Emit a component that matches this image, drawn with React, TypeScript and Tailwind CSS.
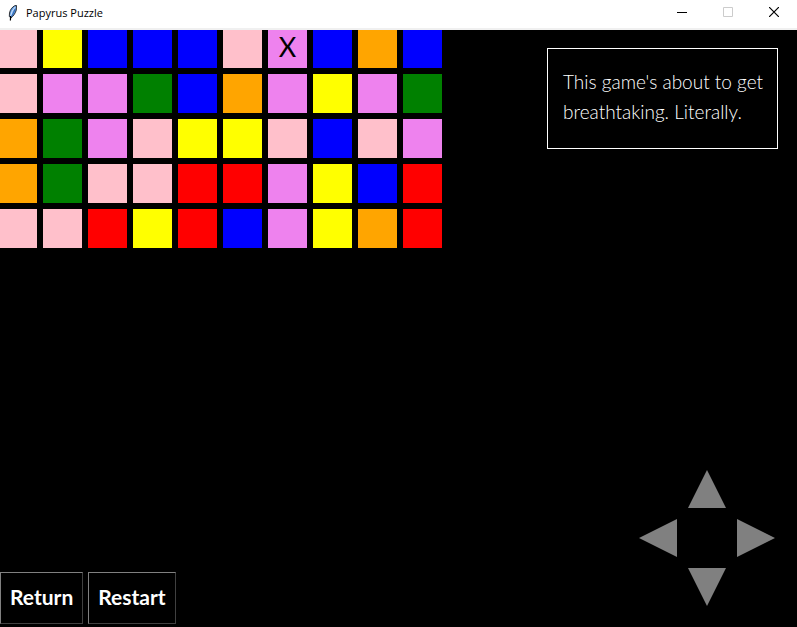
type Color = "pink" | "yellow" | "blue" | "violet" | "orange" | "green" | "red";

const fills: Record<Color, string> = {
  pink: "bg-[#ffc0cb]",
  yellow: "bg-[#ffff00]",
  blue: "bg-[#0000ff]",
  violet: "bg-[#ee82ee]",
  orange: "bg-[#ffa500]",
  green: "bg-[#008000]",
  red: "bg-[#ff0000]",
};

const board: Color[][] = [
  ["pink", "yellow", "blue", "blue", "blue", "pink", "violet", "blue", "orange", "blue"],
  ["pink", "violet", "violet", "green", "blue", "orange", "violet", "yellow", "violet", "green"],
  ["orange", "green", "violet", "pink", "yellow", "yellow", "pink", "blue", "pink", "violet"],
  ["orange", "green", "pink", "pink", "red", "red", "violet", "yellow", "blue", "red"],
  ["pink", "pink", "red", "yellow", "red", "blue", "violet", "yellow", "orange", "red"],
];

const player = { row: 0, col: 6 };

function Feather() {
  return (
    <svg width="12" height="18" viewBox="0 0 12 18" aria-hidden="true">
      <path d="M9.500 1.500 L8 1.600 C5 3 3 6 2.500 9 L2.300 12.500 L4 14 C6.500 12 8.500 9 9.300 6 Z" fill="#5b9be6" stroke="#222" strokeWidth="0.900" />
      <path d="M8.300 2.800 C6 5 4.300 8.500 3.600 12" fill="none" stroke="#c9dff8" strokeWidth="1.100" />
      <path d="M8.200 5 C7.200 8 5.800 10.500 4.400 12.800" fill="none" stroke="#2d5fa8" strokeWidth="0.900" />
      <path d="M3.600 12 L3.400 16.500" stroke="#000" strokeWidth="1.200" />
    </svg>
  );
}

function TitleBar() {
  const control = "flex h-full w-[46px] items-center justify-center";
  return (
    <header className="flex h-[30px] items-center justify-between border-b-2 border-[#f0f0f0] bg-white pl-[7px] text-black">
      <div className="flex items-center gap-[7px] pb-0.5">
        <Feather />
        <h1 className="font-['Segoe_UI','Open_Sans',sans-serif] text-[11px] leading-4">Papyrus Puzzle</h1>
      </div>
      <div className="flex h-full pb-1">
        <button className={control} aria-label="Minimize">
          <svg width="10" height="10" viewBox="0 0 10 10" shapeRendering="crispEdges">
            <path d="M0 5.500H10" stroke="#000" />
          </svg>
        </button>
        <button className={control} aria-label="Maximize" disabled>
          <svg width="10" height="10" viewBox="0 0 10 10">
            <path d="M.5 .5H9.500V9.500H.5Z" fill="none" stroke="#ccc" />
          </svg>
        </button>
        <button className={control} aria-label="Close">
          <svg width="10" height="10" viewBox="0 0 10 10">
            <path d="M0 0L10 10M10 0L0 10" stroke="#000" strokeWidth="1.200" />
          </svg>
        </button>
      </div>
    </header>
  );
}

function Board() {
  return (
    <div className="grid grid-cols-[37px_repeat(9,39px)] grid-rows-[38px_repeat(4,39px)] gap-1.5">
      {board.map((row, r) =>
        row.map((color, c) => (
          <div key={`${r}-${c}`} className={`flex items-center justify-center pb-1 text-[27px] leading-8 text-black ${fills[color]}`}>
            {r === player.row && c === player.col ? "X" : null}
          </div>
        )),
      )}
    </div>
  );
}

function Arrow({ label, points, place }: { label: string; points: string; place: string }) {
  return (
    <button aria-label={label} className={place}>
      <svg className="block" width="38" height="38" viewBox="0 0 38 38">
        <polygon points={points} fill="#808080" />
      </svg>
    </button>
  );
}

function DirectionPad() {
  return (
    <div className="grid grid-cols-[repeat(3,38px)] gap-[11px]">
      <Arrow label="Up" points="19,0 38,38 0,38" place="col-start-2 row-start-1" />
      <Arrow label="Left" points="0,19 38,0 38,38" place="col-start-1 row-start-2" />
      <Arrow label="Right" points="38,19 0,0 0,38" place="col-start-3 row-start-2" />
      <Arrow label="Down" points="19,38 38,0 0,0" place="col-start-2 row-start-3" />
    </div>
  );
}

const actionClass =
  "h-[52px] border border-t-[#808080] border-r-[#404040] border-b-[#404040] border-l-[#808080] px-[9px] pb-0.5 text-[21px] leading-6 font-bold text-white";

export default function App() {
  return (
    <div className="flex min-h-screen flex-col bg-black font-['Papyrus','Lato',sans-serif]">
      <TitleBar />
      <main className="flex flex-1 justify-between">
        <section className="flex flex-col justify-between pb-[3px]">
          <Board />
          <div className="flex gap-[5px]">
            <button className={actionClass}>Return</button>
            <button className={actionClass}>Restart</button>
          </div>
        </section>
        <aside className="flex flex-col items-end justify-between pt-[18px] pr-[19px] pb-5">
          <p className="w-[231px] border border-white pt-[18px] pr-2 pb-[21px] pl-[15px] text-[19px] leading-[30px] font-light text-white">
            This game's about to get breathtaking. Literally.
          </p>
          <div className="pr-[3px] pb-px">
            <DirectionPad />
          </div>
        </aside>
      </main>
    </div>
  );
}
